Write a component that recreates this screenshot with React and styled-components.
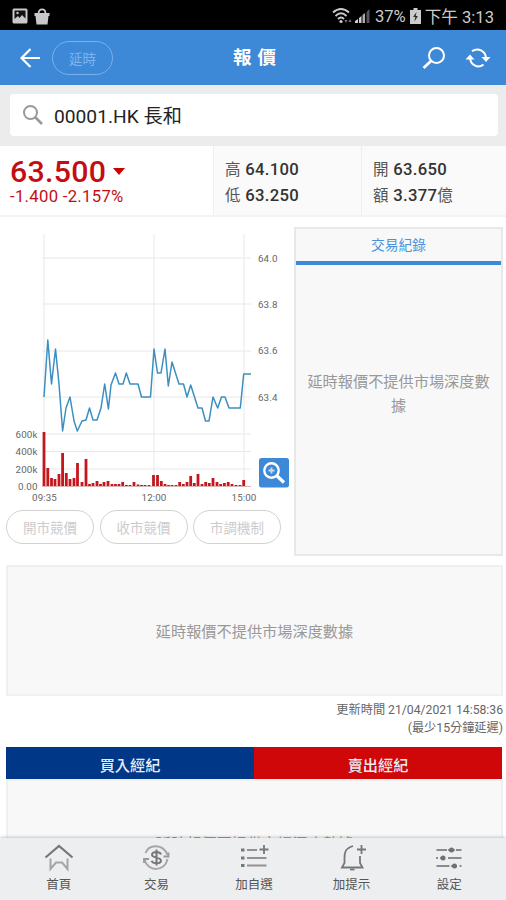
import styled, { createGlobalStyle } from 'styled-components'

const prices = [
  [44, 397], [47.8, 340], [51.5, 384], [55.5, 349], [59, 384], [62.6, 431],
  [66, 408], [70, 397], [74, 421], [77.3, 431], [82, 421], [86, 420],
  [89.5, 408], [93, 420], [97, 420], [101, 408], [104.7, 384], [108.4, 409],
  [111, 385], [115.5, 373], [119, 384], [123, 384], [126.3, 373], [130, 384],
  [138, 384], [141.5, 397], [150.5, 397], [154, 349], [157.5, 373], [161, 373],
  [165, 349], [168.3, 386], [172, 362], [179, 384], [183.5, 384], [187, 397],
  [190.7, 385], [198, 408], [202, 408], [205.5, 421], [209, 421], [213, 397],
  [217.7, 408], [221.5, 397], [225, 397], [229, 408], [240.3, 408],
  [243.7, 374], [251, 374]
]

// [x, height] of each volume bar
const volumes = [
  [44, 54], [47.8, 18], [51.5, 8], [55, 7], [59, 12], [62.6, 33], [66.3, 13],
  [70, 7], [74, 8], [77.5, 23], [82, 4], [86, 27], [89.5, 2], [93, 3],
  [97, 5], [100.5, 2], [104, 4], [108, 5], [112, 2], [115.5, 2], [119, 2],
  [122.7, 4], [126.4, 1], [130, 1], [134, 4], [138, 1.5], [141.5, 1],
  [145, 1], [149, 1], [153.5, 11], [157.5, 11], [161.3, 5], [165, 2],
  [168.5, 1], [172, 1], [176, 1], [179.7, 4], [183.3, 2], [187, 4],
  [190.7, 10], [194.3, 3], [198, 12], [202, 2], [205.7, 4], [209.3, 3],
  [213, 8], [217, 4], [220.7, 2], [224.4, 3], [228.2, 4], [232, 2],
  [236, 1], [240, 1], [243.7, 6]
]

const App = () => {
  return (
    <>
      <GlobalStyle />
      <Screen>
        <StatusBar>
          <PictureIcon />
          <BagIcon />
          <StatusRight>
            <SignalIcons />
            <span>37%</span>
            <BatteryIcon />
            <span>下午 3:13</span>
          </StatusRight>
        </StatusBar>

        <Header>
          <HeaderSide>
            <BackIcon />
            <DelayBadge>延時</DelayBadge>
          </HeaderSide>
          <PageTitle>報 價</PageTitle>
          <HeaderSide $end>
            <SearchIcon />
            <RefreshIcon />
          </HeaderSide>
        </Header>

        <SearchBand>
          <SearchBox>
            <svg width='22' height='22' viewBox='0 0 22 22' fill='none' stroke='#999' strokeWidth='2'>
              <circle cx='8.5' cy='8.5' r='6.5' />
              <path d='M13 13l7 7' strokeWidth='2.6' />
            </svg>
            <span>00001.HK 長和</span>
          </SearchBox>
        </SearchBand>

        <Quote>
          <PriceCell>
            <Price>
              63.500
              <svg width='12' height='7' viewBox='0 0 12 7'>
                <path d='M0 0h12L6 7z' fill='#c00' />
              </svg>
            </Price>
            <Change>-1.400 -2.157%</Change>
          </PriceCell>
          <StatCell $width={148}>
            <Stat><em>高</em> 64.100</Stat>
            <Stat><em>低</em> 63.250</Stat>
          </StatCell>
          <StatCell $width={145}>
            <Stat><em>開</em> 63.650</Stat>
            <Stat><em>額</em> 3.377<em>億</em></Stat>
          </StatCell>
        </Quote>

        <Main>
          <ChartColumn>
            <PriceChart />
            <PillRow>
              <Pill>開市競價</Pill>
              <Pill>收市競價</Pill>
              <Pill>市調機制</Pill>
            </PillRow>
          </ChartColumn>
          <TradePanel>
            <TradeTab>交易紀錄</TradeTab>
            <PanelBody>延時報價不提供市場深度數據</PanelBody>
          </TradePanel>
        </Main>

        <DepthPanel>延時報價不提供市場深度數據</DepthPanel>

        <Updated>
          <div>更新時間 21/04/2021 14:58:36</div>
          <div>(最少15分鐘延遲)</div>
        </Updated>

        <Brokers>
          <BrokerTab $color='#003787'>買入經紀</BrokerTab>
          <BrokerTab $color='#cf0708'>賣出經紀</BrokerTab>
        </Brokers>
        <BrokerPanel>延時報價不提供市場深度數據</BrokerPanel>

        <TabBar>
          <Tab><HomeIcon /><span>首頁</span></Tab>
          <Tab><TradeIcon /><span>交易</span></Tab>
          <Tab><ListAddIcon /><span>加自選</span></Tab>
          <Tab><BellAddIcon /><span>加提示</span></Tab>
          <Tab><SettingsIcon /><span>設定</span></Tab>
        </TabBar>
      </Screen>
    </>
  )
}

const PriceChart = () => (
  <ChartSvg width='292' height='279' viewBox='0 227 292 279'>
    <g stroke='#e8e8e8' strokeWidth='1'>
      {[258, 304, 351, 397, 434, 451.5, 469].map((y) => (
        <path key={y} d={`M42 ${y}H251`} />
      ))}
      {[44, 154, 244].map((x) => (
        <path key={x} d={`M${x} 234V487`} />
      ))}
    </g>
    <path d='M42 486.5H251' stroke='#d9b5b5' />
    {volumes.map(([x, h]) => (
      <rect key={x} x={x - 1.4} y={486 - h} width='2.8' height={h} fill='#c4161c' />
    ))}
    <polyline
      points={prices.map((p) => p.join(',')).join(' ')}
      fill='none'
      stroke='#3c8fc0'
      strokeWidth='1.5'
      strokeLinejoin='round'
    />
    <text x='258' y='261.5'>64.0</text>
    <text x='258' y='307.5'>63.8</text>
    <text x='258' y='354'>63.6</text>
    <text x='258' y='401'>63.4</text>
    <g textAnchor='end'>
      <text x='37.5' y='438'>600k</text>
      <text x='37.5' y='455'>400k</text>
      <text x='37.5' y='472.5'>200k</text>
      <text x='37.5' y='490'>0.00</text>
    </g>
    <g textAnchor='middle'>
      <text x='44.5' y='500.500'>09:35</text>
      <text x='154' y='500.500'>12:00</text>
      <text x='244' y='500.500'>15:00</text>
    </g>
    <rect x='259' y='458' width='30' height='29.5' rx='2.5' fill='#3e88d8' />
    <g fill='none' stroke='#fff'>
      <circle cx='271.5' cy='470.5' r='7.2' strokeWidth='2.4' />
      <path d='M276.5 475.500l7.5 7' strokeWidth='3.2' />
      <path d='M268.500 470.500h6M271.500 467.500v6' stroke='#c9def5' strokeWidth='1.8' />
    </g>
  </ChartSvg>
)

const PictureIcon = () => (
  <svg width='16' height='16' viewBox='0 0 16 16'>
    <rect x='.5' y='.5' width='15' height='15' rx='1.5' fill='#c9c9c9' />
    <path d='M2.5 2.5h11v8L10 7l-2.5 3L6 8l-3.500 3z' fill='#111' />
    <circle cx='5.500' cy='5' r='1.200' fill='#c9c9c9' />
  </svg>
)

const BagIcon = () => (
  <svg width='16' height='17' viewBox='0 0 16 17'>
    <path d='M.5 5h15v3h-1l-1 8.500h-11L1.500 8h-1z' fill='#c9c9c9' />
    <path d='M4.500 5.500C4.500 0 11.500 0 11.500 5.500' fill='none' stroke='#c9c9c9' strokeWidth='1.800' />
  </svg>
)

const SignalIcons = () => (
  <svg width='39' height='18' viewBox='0 0 39 18'>
    <g fill='none' stroke='#ccc' strokeWidth='1.800'>
      <path d='M1 5.500Q9 -1.500 17 5.500' />
      <path d='M3.500 9Q9 3.500 14.500 9' />
      <path d='M6 12Q9 9 12 12' />
    </g>
    <circle cx='9' cy='14.500' r='1.600' fill='#ccc' />
    <path d='M12.500 13l1.500 3 1.500-3zM16.500 15l1.500-3 1.500 3z' fill='#777' />
    <path d='M23 16v-2l3-2v4zM27 16v-5l2.500-2v7z' fill='#ccc' />
    <path d='M30.500 16V8l2.500-2v10z' fill='#aaa' />
    <path d='M34.500 16V5L37.500 2v14z' fill='#555' />
  </svg>
)

const BatteryIcon = () => (
  <svg width='11' height='16' viewBox='0 0 11 16'>
    <path d='M3.500 0h4v2H11v14H0V2h3.500z' fill='#ccc' />
    <path d='M6.500 4L3 9h2.200L4.500 13.500 8 8H5.800z' fill='#333' />
  </svg>
)

const BackIcon = () => (
  <svg width='21' height='20' viewBox='0 0 21 20' fill='none' stroke='#fff' strokeWidth='2.200'>
    <path d='M20 10H1.800M10.500 1L1.500 10l9 9' />
  </svg>
)

const SearchIcon = () => (
  <svg width='23' height='22' viewBox='0 0 23 22' fill='none' stroke='#fff' strokeWidth='2'>
    <circle cx='14.500' cy='8.500' r='7.500' />
    <path d='M9 14L1.500 21' strokeWidth='2.800' />
  </svg>
)

const RefreshIcon = () => (
  <svg width='26' height='20' viewBox='0 0 26 20' fill='none' stroke='#fff' strokeWidth='2'>
    <path d='M7 3.200C13 -.8 20.500 3 21 10' />
    <path d='M5 9C5 17 13 21 18.500 16.500' />
    <path d='M16.500 9H25.500L21 14zM.5 11.500H9.500L5 6.500z' fill='#fff' stroke='none' />
  </svg>
)

const HomeIcon = () => (
  <TabIcon>
    <path d='M1.500 14.500L15 3l13.500 11.500' strokeWidth='2.200' stroke='#777' />
    <path d='M6.500 15.500V26L12 19.500h6L23.500 26V15.500' stroke='#a5a5a5' strokeWidth='2' />
  </TabIcon>
)

const TradeIcon = () => (
  <TabIcon>
    <path d='M4.500 10C8 1 22 .5 26.500 12M26.500 16C24 29 7 29 3.500 17' stroke='#a5a5a5' strokeWidth='2' />
    <path d='M22.500 13.500h5v-4M8 16H3v4' stroke='#999' />
    <path d='M20 11.500C19 8.500 11 8 11 11.800c0 3.600 9 2 9 5.700 0 3.800-8 3.500-9.500 .3M15.500 6.500v16' strokeWidth='2' />
  </TabIcon>
)

const ListAddIcon = () => (
  <TabIcon>
    <path d='M2 7h3.500M2 15h3.500M2 22.500h3.500' strokeWidth='3' />
    <path d='M8 7h10M8 15h19.500M8 22.500h19.500' stroke='#929292' />
    <path d='M20.500 6.500h9M25 2v9' />
  </TabIcon>
)

const BellAddIcon = () => (
  <TabIcon>
    <path d='M16 3C8 5.500 7.500 9.500 7.500 15v5L5 24.500h20.500L23 20v-7' />
    <path d='M13 26.500h4.500' />
    <path d='M20 6.500h9M24.500 2v9' />
  </TabIcon>
)

const SettingsIcon = () => (
  <TabIcon>
    <path d='M2.500 7h10.500M22 7h5.500M2 15h2M14 15h13.500M2.500 23h13M25.500 23h2' stroke='#8b8b8b' />
    <path d='M14 7h7M6 15h5M17 23h6' strokeWidth='1.400' />
    <g fill='#707070' stroke='none'>
      <circle cx='17.500' cy='7' r='2.500' />
      <circle cx='9' cy='15' r='2.500' />
      <circle cx='20.500' cy='23' r='2.500' />
    </g>
  </TabIcon>
)

const TabIcon = styled.svg.attrs({ viewBox: '0 0 30 30' })`
  width: 30px;
  height: 30px;
  fill: none;
  stroke: #777;
  stroke-width: 1.8;
`

const GlobalStyle = createGlobalStyle`
  * {
    box-sizing: border-box;
  }

  body {
    margin: 0;
    background: #fff;
    font-family: Roboto, 'Noto Sans CJK TC', sans-serif;
  }

  svg {
    flex-shrink: 0;
  }
`

const Screen = styled.div`
  display: flex;
  flex-direction: column;
  width: 506px;
  height: 900px;
  overflow: hidden;
`

const StatusBar = styled.div`
  display: flex;
  align-items: center;
  flex-shrink: 0;
  gap: 6px;
  height: 30px;
  padding: 2px 12px 0;
  background: #000;
  color: #ccc;
  font-size: 16.6px;
`

const StatusRight = styled.div`
  display: flex;
  align-items: center;
  gap: 4px;
  margin-left: auto;
  white-space: nowrap;
`

const Header = styled.header`
  display: flex;
  align-items: center;
  flex-shrink: 0;
  height: 55px;
  padding: 0 15px 0 20px;
  background: #3e88d8;
`

const HeaderSide = styled.div`
  display: flex;
  align-items: center;
  justify-content: ${(p) => (p.$end ? 'flex-end' : 'flex-start')};
  gap: ${(p) => (p.$end ? '20px' : '11px')};
  width: 200px;
`

const DelayBadge = styled.span`
  display: flex;
  align-items: center;
  justify-content: center;
  width: 61px;
  height: 34px;
  border: 1px solid #78b1ed;
  border-radius: 17px;
  color: #7db4ee;
  font-size: 13.5px;
`

const PageTitle = styled.h1`
  flex: 1;
  margin: 0;
  padding: 0 2px 4px 0;
  color: #fff;
  font-size: 18.5px;
  font-weight: 700;
  text-align: center;
  word-spacing: 1.5px;
`

const SearchBand = styled.div`
  flex-shrink: 0;
  height: 61px;
  padding: 9px 8px 10px 10px;
  background: #ececec;
`

const SearchBox = styled.div`
  display: flex;
  align-items: center;
  gap: 10px;
  height: 42px;
  padding-left: 12px;
  border-radius: 4px;
  background: #fff;
  color: #222;
  font-size: 19.2px;
`

const Quote = styled.section`
  display: flex;
  flex-shrink: 0;
  height: 71px;
  border-bottom: 2px solid #f3f3f3;
`

const PriceCell = styled.div`
  width: 213px;
  padding: 8px 0 0 10px;
  color: #c40d12;
`

const Price = styled.div`
  display: flex;
  align-items: center;
  gap: 7px;
  height: 34px;
  font-size: 30.3px;
  font-weight: 500;
  letter-spacing: 0.3px;
`

const Change = styled.div`
  height: 18px;
  font-size: 16.7px;
  line-height: 18px;
  letter-spacing: 0.3px;
`

const StatCell = styled.div`
  width: ${(p) => p.$width}px;
  padding: 11px 0 0 11px;
  border-left: 1px solid #efefef;
  background: #fafafa;
`

const Stat = styled.div`
  height: 26px;
  color: #333;
  font-size: 16.7px;
  font-weight: 500;
  line-height: 26px;
  letter-spacing: 0.3px;
  white-space: nowrap;

  em {
    color: #555;
    font-size: 15.5px;
    font-style: normal;
    font-weight: 400;
  }
`

const Main = styled.section`
  display: flex;
  flex-shrink: 0;
  height: 329px;
  margin-top: 10px;
`

const ChartColumn = styled.div`
  width: 294px;
`

const ChartSvg = styled.svg`
  display: block;
  font-size: 9.8px;
  letter-spacing: 0.1px;
  fill: #666;
`

const PillRow = styled.div`
  display: flex;
  gap: 5.5px;
  padding: 4px 0 0 6px;
`

const Pill = styled.button`
  width: 88px;
  height: 34px;
  padding: 0;
  border: 1.5px solid #d2d2d2;
  border-radius: 17px;
  background: #fff;
  color: #ccc;
  font: inherit;
  font-size: 13.5px;
`

const TradePanel = styled.div`
  display: flex;
  flex-direction: column;
  width: 209px;
  border: 2px solid #e8e8e8;
  background: #f8f8f8;
`

const TradeTab = styled.div`
  height: 36px;
  border-bottom: 4px solid #3e88d8;
  color: #4a91dc;
  font-size: 13.8px;
  line-height: 33px;
  text-align: center;
`

const PanelBody = styled.div`
  display: flex;
  align-items: center;
  flex: 1;
  padding: 0 10px 32px;
  color: #999;
  font-size: 15.2px;
  line-height: 24px;
  text-align: center;
`

const DepthPanel = styled.div`
  display: flex;
  align-items: center;
  justify-content: center;
  flex-shrink: 0;
  height: 131px;
  margin: 9px 3px 0 6px;
  padding-bottom: 2px;
  border: 2px solid #f0f0f0;
  background: #f8f8f8;
  color: #999;
  font-size: 15.2px;
`

const Updated = styled.div`
  flex-shrink: 0;
  height: 51px;
  padding: 5px 3px 0 0;
  color: #666;
  font-size: 12.2px;
  line-height: 18px;
  text-align: right;
`

const Brokers = styled.div`
  display: flex;
  flex-shrink: 0;
  margin: 0 4px 0 6px;
`

const BrokerTab = styled.div`
  flex: 1;
  height: 32px;
  padding-top: 2px;
  background: ${(p) => p.$color};
  color: #e8edf4;
  font-size: 15.2px;
  font-weight: 500;
  line-height: 35px;
  text-align: center;
`

// runs on below the tab bar, which covers most of its text
const BrokerPanel = styled(DepthPanel)`
  margin-top: 0;
  margin-bottom: -72px;
  padding-bottom: 5px;
`

const TabBar = styled.nav`
  display: flex;
  flex-shrink: 0;
  height: 62px;
  padding: 5px 8px 0 10px;
  background: #eceef0;
  box-shadow: 0 -1px 3px rgba(0, 0, 0, 0.2);
  z-index: 1;
`

const Tab = styled.div`
  display: flex;
  flex-direction: column;
  align-items: center;
  flex: 1;
  color: #555;
  font-size: 12.5px;
  line-height: 24px;
`

export default App
